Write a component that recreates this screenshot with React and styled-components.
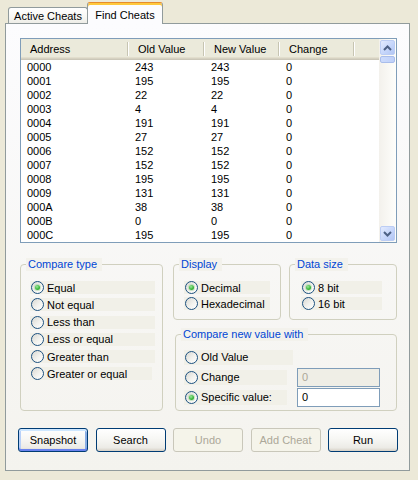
import React from 'react';
import styled, { createGlobalStyle } from 'styled-components';

const Global = createGlobalStyle`
  html, body { margin: 0; padding: 0; background: #ECE9D8; }
  body {
    width: 418px; height: 480px; overflow: hidden;
    font-family: "Liberation Sans", Arial, sans-serif;
    font-size: 11px; color: #000;
  }
  * { box-sizing: border-box; }
`;

const Window = styled.div`
  width: 418px;
  height: 480px;
  padding: 2px 8px 0 5px;
  display: flex;
  flex-direction: column;
`;

const TabStrip = styled.div`
  position: relative;
  z-index: 2;
  height: 21px;
  display: flex;
  align-items: flex-end;
  padding-left: 3px;
`;

const Tab = styled.div`
  width: ${p => (p.$active ? 76 : 80)}px;
  height: ${p => (p.$active ? 22 : 16)}px;
  margin-left: ${p => (p.$active ? -1 : 0)}px;
  margin-bottom: ${p => (p.$active ? -1 : 0)}px;
  border: 1px solid #919B9C;
  border-bottom: none;
  border-radius: 3px 3px 0 0;
  display: flex;
  align-items: center;
  justify-content: center;
  padding-top: ${p => (p.$active ? 2 : 1)}px;
  background: ${p =>
    p.$active
      ? '#FCFCFE'
      : 'linear-gradient(180deg, #FFFFFF 0%, #F7F7F3 60%, #EEEDE7 100%)'};
  border-top-color: ${p => (p.$active ? '#E68B2C' : '#919B9C')};
  box-shadow: ${p => (p.$active ? 'inset 0 2px 0 #FFC83C' : 'none')};
  white-space: nowrap;
`;

const Pane = styled.div`
  height: 448px;
  border: 1px solid #919B9C;
  background: linear-gradient(180deg, #FCFCFE 0%, #F4F3EE 100%);
  padding: 14px 12px 0 14px;
  display: flex;
  flex-direction: column;
`;

const ListView = styled.div`
  height: 205px;
  border: 1px solid #7F9DB9;
  background: #FFFFFF;
  display: flex;
`;

const ListMain = styled.div`
  flex: 1;
  display: flex;
  flex-direction: column;
  overflow: hidden;
`;

const HeaderRow = styled.div`
  height: 21px;
  flex: none;
  display: flex;
  background: #EBEADB;
  box-shadow: inset 0 -1px 0 #CBC7B8, inset 0 -2px 0 #D6D2C2, inset 0 -3px 0 #E2DECD;
`;

const HeaderCell = styled.div`
  width: ${p => p.$w}px;
  flex: none;
  display: flex;
  align-items: center;
  justify-content: space-between;
  padding-bottom: 2px;
  padding-left: 10px;
  &:first-child { padding-left: 9px; }
`;

const Sep = styled.span`
  width: 1px;
  height: 14px;
  background: #C7C5B2;
  box-shadow: 1px 0 0 #FFFFFF;
`;

const Row = styled.div`
  height: 14px;
  flex: none;
  display: flex;
  line-height: 14px;
`;

const Cell = styled.div`
  width: ${p => p.$w}px;
  flex: none;
  padding-left: 7px;
  white-space: nowrap;
  &:first-child { padding-left: 6px; }
`;

const ScrollBar = styled.div`
  width: 17px;
  flex: none;
  display: flex;
  flex-direction: column;
  background: linear-gradient(90deg, #F3F1EC 0%, #FEFEFB 100%);
`;

const ScrollBtn = styled.div`
  height: 15px;
  margin: 1px;
  flex: none;
  border-radius: 2px;
  border: 1px solid #BCCDF4;
  background: linear-gradient(135deg, #E3EBFE 0%, #C6D6FB 55%, #B2C6F4 100%);
  display: flex;
  align-items: center;
  justify-content: center;
`;

const Thumb = styled.div`
  height: 7px;
  margin: 0 1px;
  flex: none;
  border-radius: 2px;
  border: 1px solid #A9BDEB;
  background: linear-gradient(90deg, #CCDBFC 0%, #BFD0F9 100%);
`;

const TrackFill = styled.div`
  flex: 1;
`;

const Options = styled.div`
  margin-top: 15px;
  display: flex;
  gap: 10px;
`;

const RightCol = styled.div`
  display: flex;
  flex-direction: column;
  gap: 8px;
`;

const TopGroups = styled.div`
  display: flex;
  gap: 8px;
`;

const Group = styled.fieldset`
  margin: 0 0 0 ${p => p.$ml || 0}px;
  padding: 0;
  min-width: 0;
  width: ${p => p.$w}px;
  height: ${p => p.$h}px;
  border: 1px solid #D0D0BF;
  border-radius: 4px;
`;

const Legend = styled.legend`
  margin-left: 5px;
  padding: 0 5px 0 2px;
  line-height: 13px;
  color: #0046D5;
  background: #F3F2EC;
`;

const OptionList = styled.div`
  display: flex;
  flex-direction: column;
  gap: ${p => p.$gap}px;
  padding: ${p => p.$pt}px ${p => p.$pr || 0}px 0 ${p => p.$pl}px;
`;

const OptionRow = styled.div`
  display: flex;
  align-items: center;
  height: ${p => p.$h || 'auto'};
`;

const Band = styled.label`
  width: ${p => p.$w}px;
  height: ${p => p.$h}px;
  flex: none;
  display: flex;
  align-items: center;
  gap: 3px;
  padding-left: 1px;
  background: #F1F0E8;
  white-space: nowrap;
`;

const RadioCircle = styled.span`
  width: 13px;
  height: 13px;
  flex: none;
  border-radius: 50%;
  border: 1px solid #1C5180;
  background: linear-gradient(135deg, #D8D8D2 0%, #F2F2EE 55%, #FFFFFF 100%);
  display: flex;
  align-items: center;
  justify-content: center;
`;

const RadioDot = styled.span`
  width: 5px;
  height: 5px;
  border-radius: 50%;
  background: radial-gradient(circle at 40% 35%, #9CE69C 0%, #3DB83D 55%, #1E961E 100%);
  box-shadow: 0 0 0 1px rgba(120, 200, 120, 0.35);
`;

const TextBox = styled.div`
  width: 83px;
  height: 19px;
  margin-left: auto;
  border: 1px solid #7F9DB9;
  background: ${p => (p.$disabled ? '#EFEEE6' : '#FFFFFF')};
  color: ${p => (p.$disabled ? '#ACA899' : '#000000')};
  display: flex;
  align-items: center;
  padding-left: 4px;
`;

const ButtonRow = styled.div`
  margin: 17px -1px 0 -2px;
  display: flex;
  justify-content: space-between;
`;

const Button = styled.button`
  width: 70px;
  height: 24px;
  padding: 0;
  font: inherit;
  border-radius: 3px;
  border: 1px solid ${p => (p.disabled ? '#C9C7BA' : '#003C74')};
  color: ${p => (p.disabled ? '#ACA899' : '#000000')};
  background: ${p =>
    p.disabled
      ? '#F5F4EA'
      : 'linear-gradient(180deg, #FFFFFF 0%, #F7F7F4 45%, #ECEBE6 85%, #D6D0C5 100%)'};
  box-shadow: ${p =>
    p.$default
      ? 'inset 0 2px 0 #CEE7FF, inset 0 -2px 0 #6982EE, inset 2px 0 0 #B8D0F8, inset -2px 0 0 #89ADE4'
      : 'none'};
`;

const cols = [
  { label: 'Address', w: 107 },
  { label: 'Old Value', w: 76 },
  { label: 'New Value', w: 75 },
  { label: 'Change', w: 75 },
];

const data = [
  ['0000', '243', '243', '0'],
  ['0001', '195', '195', '0'],
  ['0002', '22', '22', '0'],
  ['0003', '4', '4', '0'],
  ['0004', '191', '191', '0'],
  ['0005', '27', '27', '0'],
  ['0006', '152', '152', '0'],
  ['0007', '152', '152', '0'],
  ['0008', '195', '195', '0'],
  ['0009', '131', '131', '0'],
  ['000A', '38', '38', '0'],
  ['000B', '0', '0', '0'],
  ['000C', '195', '195', '0'],
];

const compareTypes = [
  { label: 'Equal', checked: true, w: 125 },
  { label: 'Not equal', w: 125 },
  { label: 'Less than', w: 125 },
  { label: 'Less or equal', w: 125 },
  { label: 'Greater than', w: 125 },
  { label: 'Greater or equal', w: 122 },
];

function Radio({ checked }) {
  return <RadioCircle>{checked && <RadioDot />}</RadioCircle>;
}

function Arrow({ down }) {
  return (
    <svg width="9" height="6" viewBox="0 0 9 6">
      <polyline
        points={down ? '1,1 4.5,4.5 8,1' : '1,5 4.5,1.5 8,5'}
        fill="none"
        stroke="#4D6185"
        strokeWidth="2"
      />
    </svg>
  );
}

export default function App() {
  return (
    <>
      <Global />
      <Window>
        <TabStrip>
          <Tab>Active Cheats</Tab>
          <Tab $active>Find Cheats</Tab>
        </TabStrip>
        <Pane>
          <ListView>
            <ListMain>
              <HeaderRow>
                {cols.map(c => (
                  <HeaderCell key={c.label} $w={c.w}>
                    <span>{c.label}</span>
                    <Sep />
                  </HeaderCell>
                ))}
              </HeaderRow>
              {data.map(r => (
                <Row key={r[0]}>
                  {r.map((v, i) => (
                    <Cell key={i} $w={cols[i].w}>{v}</Cell>
                  ))}
                </Row>
              ))}
            </ListMain>
            <ScrollBar>
              <ScrollBtn><Arrow /></ScrollBtn>
              <Thumb />
              <TrackFill />
              <ScrollBtn><Arrow down /></ScrollBtn>
            </ScrollBar>
          </ListView>

          <Options>
            <Group $w={143} $h={153}>
              <Legend>Compare type</Legend>
              <OptionList $gap={4.3} $pt={10} $pl={9}>
                {compareTypes.map(o => (
                  <Band key={o.label} $w={o.w} $h={13}>
                    <Radio checked={o.checked} />
                    {o.label}
                  </Band>
                ))}
              </OptionList>
            </Group>
            <RightCol>
              <TopGroups>
                <Group $w={108} $h={62}>
                  <Legend>Display</Legend>
                  <OptionList $gap={3} $pt={10} $pl={10}>
                    <Band $w={86} $h={13}><Radio checked />Decimal</Band>
                    <Band $w={86} $h={13}><Radio />Hexadecimal</Band>
                  </OptionList>
                </Group>
                <Group $w={108} $h={62}>
                  <Legend>Data size</Legend>
                  <OptionList $gap={3} $pt={10} $pl={11}>
                    <Band $w={81} $h={13}><Radio checked />8 bit</Band>
                    <Band $w={81} $h={13}><Radio />16 bit</Band>
                  </OptionList>
                </Group>
              </TopGroups>
              <Group $w={222} $h={83} $ml={2}>
                <Legend>Compare new value with</Legend>
                <OptionList $gap={0} $pt={6} $pl={8} $pr={16}>
                  <OptionRow $h="20px">
                    <Band $w={109} $h={15}><Radio />Old Value</Band>
                  </OptionRow>
                  <OptionRow $h="20px">
                    <Band $w={103} $h={15}><Radio />Change</Band>
                    <TextBox $disabled>0</TextBox>
                  </OptionRow>
                  <OptionRow $h="20px">
                    <Band $w={103} $h={15}><Radio checked />Specific value:</Band>
                    <TextBox>0</TextBox>
                  </OptionRow>
                </OptionList>
              </Group>
            </RightCol>
          </Options>

          <ButtonRow>
            <Button $default>Snapshot</Button>
            <Button>Search</Button>
            <Button disabled>Undo</Button>
            <Button disabled>Add Cheat</Button>
            <Button>Run</Button>
          </ButtonRow>
        </Pane>
      </Window>
    </>
  );
}
